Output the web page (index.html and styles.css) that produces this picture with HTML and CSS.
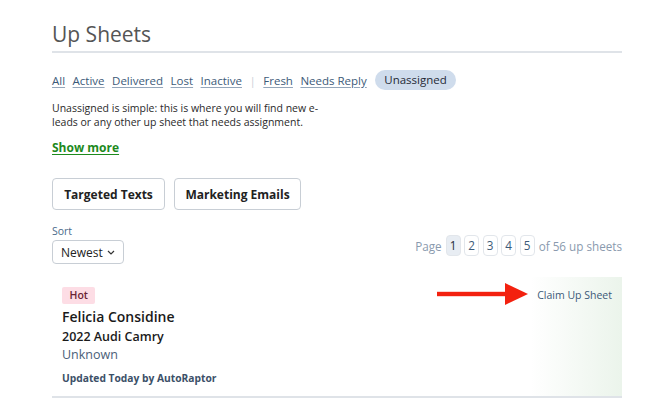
FILE: index.html
```html
<!DOCTYPE html>
<html>
<head>
<meta charset="utf-8">
<link rel="stylesheet" href="styles.css">
</head>
<body>
<main class="page">
  <h1 class="title">Up Sheets</h1>
  <nav class="tabs">
    <a href="#">All</a>
    <a href="#">Active</a>
    <a href="#">Delivered</a>
    <a href="#">Lost</a>
    <a href="#">Inactive</a>
    <span class="sep">|</span>
    <a href="#">Fresh</a>
    <a href="#">Needs Reply</a>
    <span class="pill">Unassigned</span>
  </nav>
  <p class="desc">Unassigned is simple: this is where you will find new e-<br>leads or any other up sheet that needs assignment.</p>
  <a href="#" class="more">Show more</a>
  <div class="actions">
    <button class="btn btn-texts">Targeted Texts</button>
    <button class="btn btn-emails">Marketing Emails</button>
  </div>
  <div class="toolbar">
    <div class="sort">
      <label class="sort-label">Sort</label>
      <div class="select">Newest <svg width="8" height="5" viewBox="0 0 8 5"><path d="M1 1l3 3 3-3" fill="none" stroke="#333" stroke-width="1.2"/></svg></div>
    </div>
    <div class="pager">
      <span class="pg-label">Page</span>
      <span class="pg active">1</span>
      <span class="pg">2</span>
      <span class="pg">3</span>
      <span class="pg">4</span>
      <span class="pg">5</span>
      <span class="pg-total">of 56 up sheets</span>
    </div>
  </div>
  <section class="card">
    <div class="card-main">
      <span class="badge">Hot</span>
      <div class="name">Felicia Considine</div>
      <div class="car">2022 Audi Camry</div>
      <div class="status">Unknown</div>
      <div class="updated">Updated Today by AutoRaptor</div>
    </div>
    <a href="#" class="claim">Claim Up Sheet</a>
    <svg class="arrow" width="92" height="22" viewBox="0 0 92 22"><rect x="0" y="8.8" width="70" height="4.4" fill="#f3210f"/><polygon points="68,0 91,11 68,22" fill="#f3210f"/></svg>
  </section>
</main>
</body>
</html>
```
FILE: styles.css
```css
* { box-sizing: border-box; }
body { margin: 0; background: #fff; font-family: "Open Sans", "Noto Sans", sans-serif; color: #222; }
.page { width: 570px; margin-left: 52px; padding-top: 20px; }
.title { font-size: 21px; font-weight: 400; color: #555; margin: 0; line-height: 28px; padding-bottom: 3px; border-bottom: 2px solid #dfe3e8; }
.tabs { display: flex; align-items: center; height: 20px; margin-top: 17px; font-size: 11.5px; gap: 7.5px; }
.tabs a { color: #3c5a78; text-decoration: underline; text-underline-offset: 2px; text-decoration-color: #94a6ba; }
.tabs .sep { color: #c9d0d8; }
.pill { background: #cfdcec; color: #1f2a36; border-radius: 10px; padding: 0 9.5px; line-height: 20px; margin-left: 0.5px; }
.desc { font-size: 10.5px; line-height: 14px; color: #2a2a2a; margin: 11px 0 0; }
.more { display: block; width: max-content; margin-top: 11px; font-size: 12px; line-height: 16px; font-weight: 700; color: #1d8a1d; text-decoration: underline; text-underline-offset: 2px; }
.actions { display: flex; gap: 9px; margin-top: 22px; }
.btn { font-family: inherit; font-size: 12px; font-weight: 700; color: #222; background: #fff; border: 1px solid #c8ced5; border-radius: 4px; height: 32px; padding: 0; text-align: center; }
.btn-texts { width: 113px; }
.btn-emails { width: 127px; }
.toolbar { display: flex; justify-content: space-between; align-items: flex-end; margin-top: 14px; }
.sort-label { display: block; font-size: 10.5px; color: #4a6a8a; line-height: 14px; }
.select { display: flex; align-items: center; gap: 4px; width: 72px; height: 24px; margin-top: 2px; padding: 0 8px; border: 1px solid #c8ced5; border-radius: 4px; font-size: 12px; color: #222; }
.pager { display: flex; align-items: center; gap: 3.5px; font-size: 11.7px; color: #8a9aae; margin-bottom: 8px; }
.pg-label { margin-right: 0.5px; }
.pg-total { margin-left: 0.5px; }
.pg { display: inline-block; width: 15px; height: 21px; line-height: 19px; text-align: center; border: 1px solid #e2e6eb; border-radius: 4px; color: #3c5a78; }
.pg.active { background: #e8edf3; color: #1f2a36; }
.card { position: relative; display: flex; justify-content: space-between; align-items: flex-start; margin-top: 13px; padding: 10px 10px 11px; border-bottom: 2px solid #dfe3e8; background: linear-gradient(90deg, #fff 0%, #fff 84%, #ebf4eb 100%); }
.badge { display: block; width: max-content; background: #fddde5; color: #6b2335; font-size: 10.5px; font-weight: 600; padding: 0 7.5px; line-height: 17px; border-radius: 2px; }
.name { font-size: 14px; font-weight: 600; color: #1a1a1a; margin-top: 3px; line-height: 20px; }
.car { font-size: 12.5px; font-weight: 600; color: #1a1a1a; line-height: 18px; margin-top: 1px; }
.status { font-size: 12.5px; color: #4a6078; line-height: 18px; }
.updated { font-size: 10.25px; font-weight: 700; color: #3c5068; margin-top: 7px; line-height: 14px; }
.claim { font-size: 10.5px; color: #3c5a78; text-decoration: none; line-height: 14px; margin-top: 1px; }
.arrow { position: absolute; left: 385px; top: 6px; }
```
